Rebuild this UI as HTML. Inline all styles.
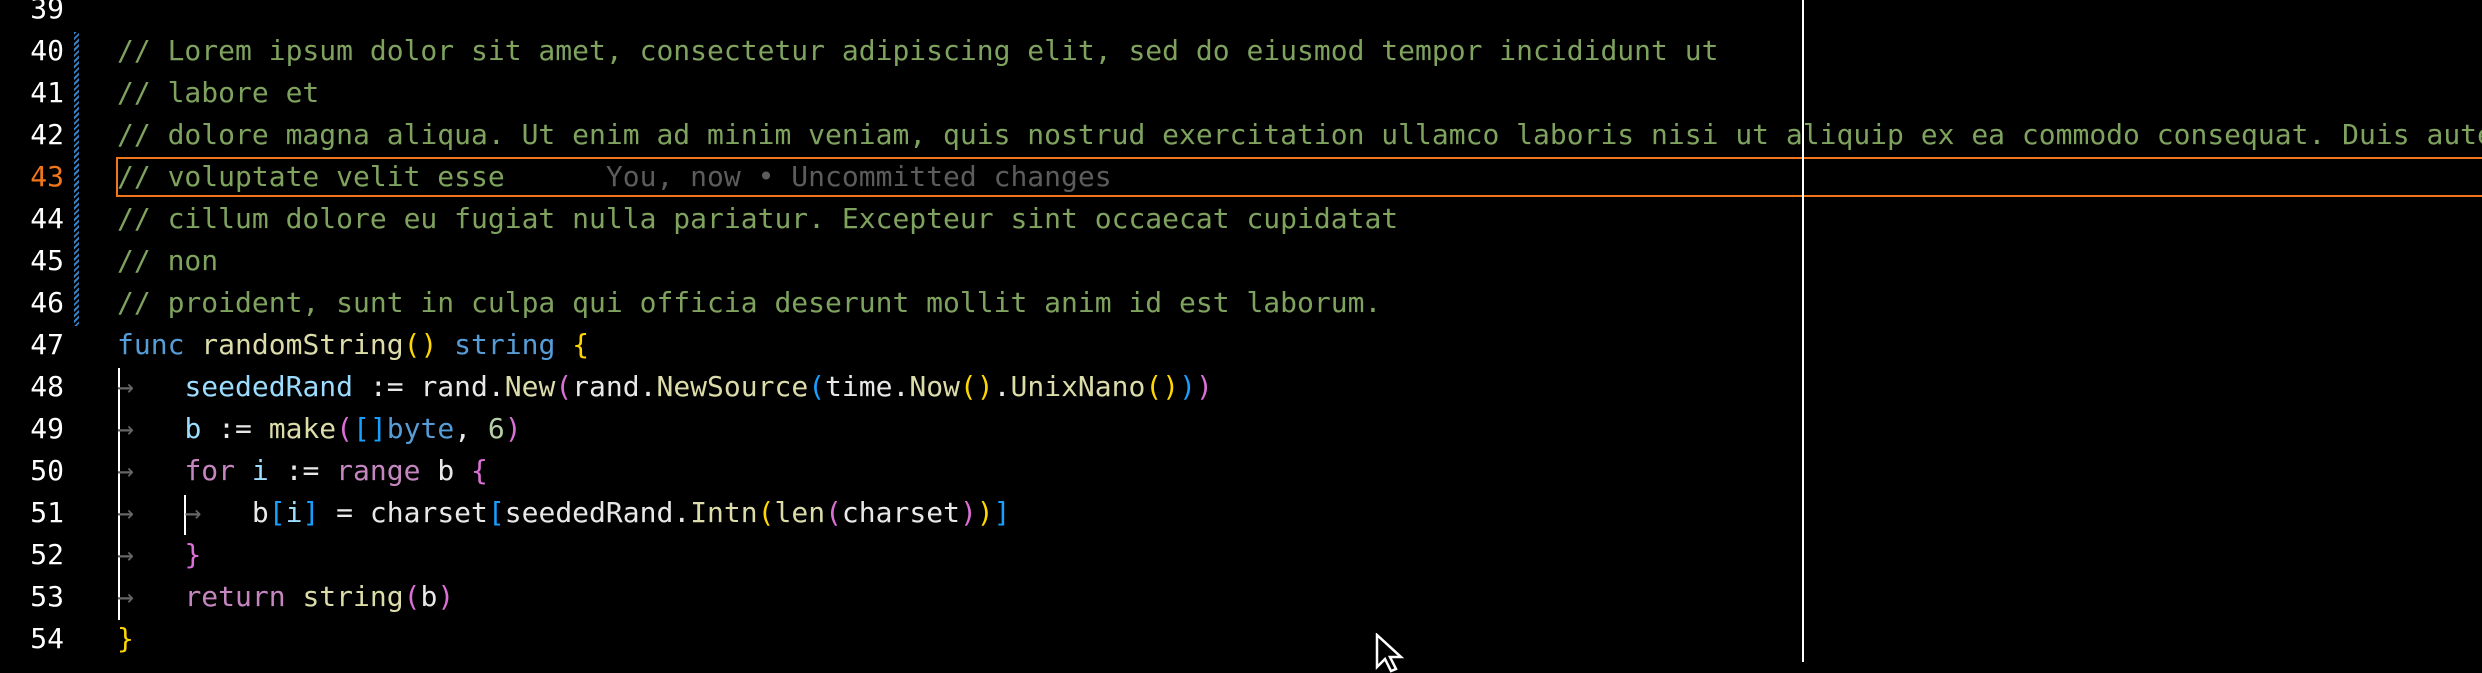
<!DOCTYPE html>
<html><head><meta charset="utf-8"><style>
body{margin:0;width:2482px;height:662px;background:#000;overflow:hidden;position:relative;font-family:"DejaVu Sans Mono","Liberation Mono",monospace;font-size:28.0px;}
.l{position:absolute;left:0;height:42px;line-height:42px;white-space:pre;width:2482px}
.n{position:absolute;right:2418px;color:#fff;text-align:right}
.c{position:absolute;left:117px;color:#7fa35f}
.w{color:#e8e8e8}.k{color:#569cd6}.y{color:#dcdcaa}.g{color:#ffd700}.p{color:#da70d6}.b{color:#179fff}.lb{color:#9cdcfe}.pk{color:#c586c0}.num{color:#b5cea8}
.ar{color:#666}
.hatch{position:absolute;left:74px;width:5px;background:repeating-linear-gradient(135deg,#3a7fc0 0 2px,#000 2px 4px)}
</style></head><body>
<div class="hatch" style="top:32px;height:294px"></div>
<div style="position:absolute;left:116px;top:157px;width:2370px;height:40px;border:2px solid #f0761c;box-sizing:border-box"></div>
<div style="position:absolute;left:1802px;top:0;width:2px;height:662px;background:#fff"></div>
<div style="position:absolute;left:118px;top:368px;width:2px;height:252px;background:#fff"></div>
<div style="position:absolute;left:184px;top:495px;width:2px;height:40px;background:#fff"></div>

<div class="l" style="top:-12px"><span class="n">39</span></div>
<div class="l" style="top:30px"><span class="n">40</span><span class="c">// Lorem ipsum dolor sit amet, consectetur adipiscing elit, sed do eiusmod tempor incididunt ut</span></div>
<div class="l" style="top:72px"><span class="n">41</span><span class="c">// labore et</span></div>
<div class="l" style="top:114px"><span class="n">42</span><span class="c">// dolore magna aliqua. Ut enim ad minim veniam, quis nostrud exercitation ullamco laboris nisi ut aliquip ex ea commodo consequat. Duis aute</span></div>
<div class="l" style="top:156px"><span class="n" style="color:#f0761c">43</span><span class="c">// voluptate velit esse      <span style="color:#5c5c5c">You, now • Uncommitted changes</span></span></div>
<div class="l" style="top:198px"><span class="n">44</span><span class="c">// cillum dolore eu fugiat nulla pariatur. Excepteur sint occaecat cupidatat</span></div>
<div class="l" style="top:240px"><span class="n">45</span><span class="c">// non</span></div>
<div class="l" style="top:282px"><span class="n">46</span><span class="c">// proident, sunt in culpa qui officia deserunt mollit anim id est laborum.</span></div>
<div class="l" style="top:324px"><span class="n">47</span><span class="c"><span class="k">func</span> <span class="y">randomString</span><span class="g">()</span> <span class="k">string</span> <span class="g">{</span></span></div>
<div class="l" style="top:366px"><span class="n">48</span><span class="c"><span class="ar">→</span>   <span class="lb">seededRand</span><span class="w"> := rand.</span><span class="y">New</span><span class="p">(</span><span class="w">rand.</span><span class="y">NewSource</span><span class="b">(</span><span class="w">time.</span><span class="y">Now</span><span class="g">()</span><span class="w">.</span><span class="y">UnixNano</span><span class="g">()</span><span class="b">)</span><span class="p">)</span></span></div>
<div class="l" style="top:408px"><span class="n">49</span><span class="c"><span class="ar">→</span>   <span class="lb">b</span><span class="w"> := </span><span class="y">make</span><span class="p">(</span><span class="b">[]</span><span class="k">byte</span><span class="w">, </span><span class="num">6</span><span class="p">)</span></span></div>
<div class="l" style="top:450px"><span class="n">50</span><span class="c"><span class="ar">→</span>   <span class="pk">for</span> <span class="lb">i</span><span class="w"> := </span><span class="pk">range</span><span class="w"> b </span><span class="p">{</span></span></div>
<div class="l" style="top:492px"><span class="n">51</span><span class="c"><span class="ar">→</span>   <span class="ar">→</span>   <span class="w">b</span><span class="b">[</span><span class="lb">i</span><span class="b">]</span><span class="w"> = charset</span><span class="b">[</span><span class="w">seededRand.</span><span class="y">Intn</span><span class="g">(</span><span class="y">len</span><span class="p">(</span><span class="w">charset</span><span class="p">)</span><span class="g">)</span><span class="b">]</span></span></div>
<div class="l" style="top:534px"><span class="n">52</span><span class="c"><span class="ar">→</span>   <span class="p">}</span></span></div>
<div class="l" style="top:576px"><span class="n">53</span><span class="c"><span class="ar">→</span>   <span class="pk">return</span> <span class="y">string</span><span class="p">(</span><span class="w">b</span><span class="p">)</span></span></div>
<div class="l" style="top:618px"><span class="n">54</span><span class="c"><span class="g">}</span></span></div>
<svg style="position:absolute;left:1375px;top:633px" width="40" height="40" viewBox="0 0 40 40"><path d="M2 2 L2 34 L10 26 L16 38 L21 36 L15 24 L26 24 Z" fill="#000" stroke="#fff" stroke-width="2.5"/></svg>
</body></html>
